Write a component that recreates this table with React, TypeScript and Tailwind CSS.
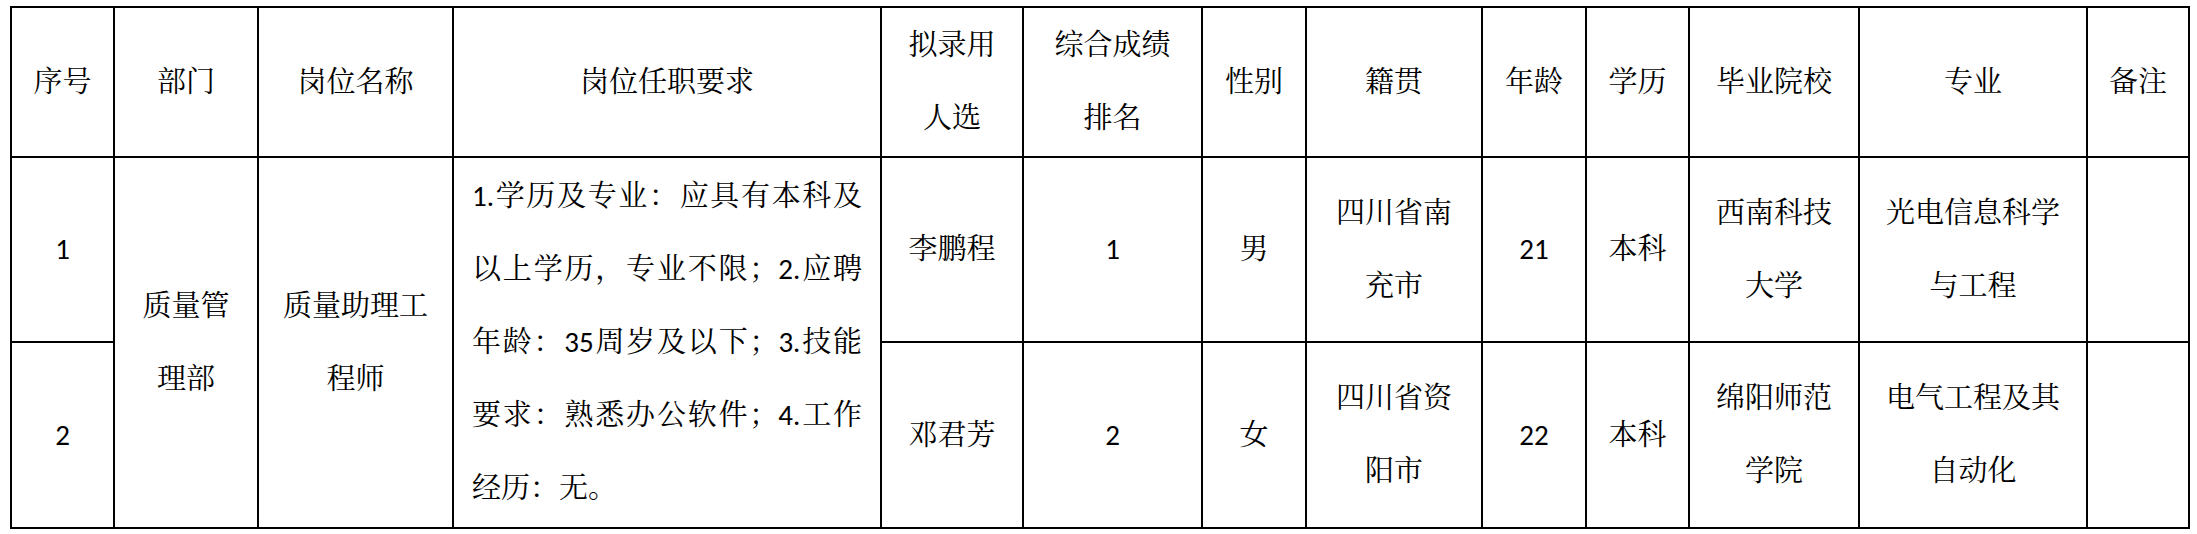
import React from 'react'

type CellProps = {
  children?: React.ReactNode
  className?: string
}

function Cell({ children, className = '' }: CellProps) {
  return (
    <div className={`bg-white flex items-center justify-center text-center ${className}`}>
      <div>{children}</div>
    </div>
  )
}

const headers: React.ReactNode[] = [
  '序号',
  '部门',
  '岗位名称',
  '岗位任职要求',
  <>拟录用<br />人选</>,
  <>综合成绩<br />排名</>,
  '性别',
  '籍贯',
  '年龄',
  '学历',
  '毕业院校',
  '专业',
  '备注',
]

const people = [
  {
    no: '1',
    name: '李鹏程',
    rank: '1',
    sex: '男',
    origin: ['四川省南', '充市'],
    age: '21',
    edu: '本科',
    school: ['西南科技', '大学'],
    major: ['光电信息科学', '与工程'],
  },
  {
    no: '2',
    name: '邓君芳',
    rank: '2',
    sex: '女',
    origin: ['四川省资', '阳市'],
    age: '22',
    edu: '本科',
    school: ['绵阳师范', '学院'],
    major: ['电气工程及其', '自动化'],
  },
]

const requirement = [
  '1.学历及专业：应具有本科及',
  '以上学历，专业不限；2.应聘',
  '年龄：35周岁及以下；3.技能',
  '要求：熟悉办公软件；4.工作',
]

export default function App() {
  return (
    <div className="min-h-screen bg-white text-black pl-[10px] pt-[6px] font-[Carlito,Lato,'Noto_Serif_CJK_SC','Noto_Sans_CJK_SC',sans-serif] text-[29px] leading-[73px]">
      <div className="grid w-fit bg-black p-[2px] gap-[2px] grid-cols-[101px_142px_193px_426px_140px_177px_102px_174px_102px_101px_168px_226px_100px] grid-rows-[148px_183px_184px]">
        {headers.map((h, i) => (
          <Cell key={i}>{h}</Cell>
        ))}

        {people.map((p, idx) => (
          <React.Fragment key={p.no}>
            <Cell>{p.no}</Cell>
            {idx === 0 && (
              <>
                <Cell className="row-span-2">质量管<br />理部</Cell>
                <Cell className="row-span-2">质量助理工<br />程师</Cell>
                <div className="row-span-2 bg-white flex flex-col justify-center pl-[18px]">
                  {requirement.map((line) => (
                    <div key={line} className="w-[390px] whitespace-nowrap text-justify [text-align-last:justify]">
                      {line}
                    </div>
                  ))}
                  <div className="whitespace-nowrap">经历：无。</div>
                </div>
              </>
            )}
            <Cell>{p.name}</Cell>
            <Cell>{p.rank}</Cell>
            <Cell>{p.sex}</Cell>
            <Cell>{p.origin[0]}<br />{p.origin[1]}</Cell>
            <Cell>{p.age}</Cell>
            <Cell>{p.edu}</Cell>
            <Cell>{p.school[0]}<br />{p.school[1]}</Cell>
            <Cell>{p.major[0]}<br />{p.major[1]}</Cell>
            <Cell />
          </React.Fragment>
        ))}
      </div>
    </div>
  )
}
